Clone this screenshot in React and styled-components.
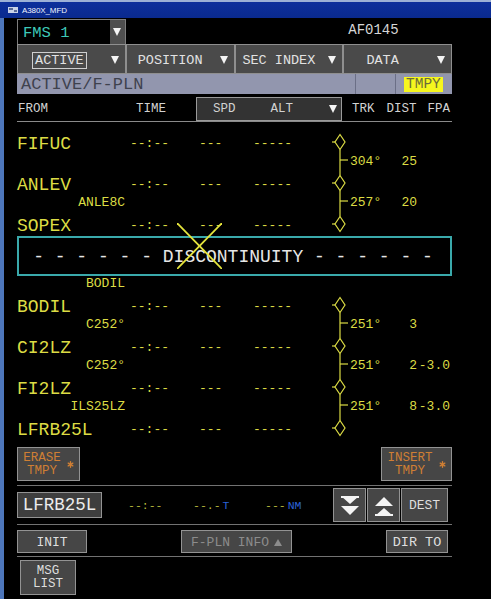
import React from "react";
import styled, { createGlobalStyle } from "styled-components";

const MONO = `"Liberation Mono", "DejaVu Sans Mono", monospace`;
const YELLOW = "#dcdc44";
const ORANGE = "#cf7f34";

const GlobalStyle = createGlobalStyle`
  html, body { margin: 0; padding: 0; background: #000; }
  body { width: 491px; height: 599px; overflow: hidden; font-family: ${MONO}; }
  * { box-sizing: border-box; }
`;

const Window = styled.div`
  width: 491px;
  height: 599px;
  display: flex;
  flex-direction: column;
  background: #000;
`;

const TitleBar = styled.div`
  height: 18px;
  flex: none;
  display: flex;
  align-items: center;
  gap: 4px;
  padding-left: 8px;
  border-top: 2px solid #9cb0d6;
  background: linear-gradient(#0d2f9c, #0a2a8e);
`;

const TitleText = styled.span`
  font-family: "Liberation Sans", Arial, sans-serif;
  font-size: 8px;
  color: #f2f4ff;
  letter-spacing: -0.1px;
`;

const Screen = styled.div`
  flex: 1;
  border-left: 4px solid #4d76bb;
  padding: 1px 0 0 13px;
`;

const Panel = styled.div`
  width: 435px;
  display: flex;
  flex-direction: column;
`;

/* ---------- top selectors ---------- */

const TopRow = styled.div`
  display: grid;
  grid-template-columns: repeat(4, 1fr);
  height: 25px;
`;

const FmsSelect = styled.div`
  display: flex;
  border: 1px solid #7d7d7d;
  border-bottom: none;
  background: #000;
`;

const FmsLabel = styled.span`
  flex: 1;
  padding: 3px 0 0 5px;
  font-size: 15.5px;
  line-height: 20px;
  color: #3ec9b9;
`;

const DropBox = styled.span`
  width: 15px;
  display: flex;
  align-items: center;
  justify-content: center;
  background: #4f4f4f;
`;

const FlightId = styled.span`
  grid-column: 4;
  padding: 2px 0 0 5px;
  font-size: 14px;
  line-height: 18px;
  color: #d6d6d6;
`;

const TabRow = styled.div`
  display: grid;
  grid-template-columns: repeat(4, 1fr);
  height: 30px;
`;

const Tab = styled.div`
  display: flex;
  align-items: center;
  padding: 2px 6px 0 0;
  background: #4a4a4a;
  border: 1px solid #8f8f8f;
  color: #e2e2e2;
  font-size: 13.5px;
`;

const TabLabel = styled.span`
  flex: 1;
  text-align: center;
  padding-right: ${(p) => p.$shift || 6}px;
`;

const Boxed = styled.span`
  border: 1px solid #cfcfcf;
  padding: 0 2px;
  line-height: 17px;
`;

const Caret = ({ size = 8, color = "#f4f4f4" }) => (
  <svg width={size} height={size} viewBox="0 0 8 8">
    <polygon points="0,0 8,0 4,8" fill={color} />
  </svg>
);

const PageBar = styled.div`
  display: flex;
  height: 20px;
  background: #9296ae;
`;

const PageTitle = styled.span`
  flex: 1;
  padding: 1px 0 0 4px;
  font-size: 17px;
  line-height: 19px;
  color: #3f424e;
`;

const PageCell = styled.span`
  width: ${(p) => p.$w}px;
  border-left: 1px solid #6b6f86;
  display: flex;
  align-items: center;
  padding-left: 8px;
`;

const TmpyBadge = styled.span`
  background: #f6f61e;
  color: #6c6c3a;
  font-size: 14.5px;
  line-height: 15px;
  padding: 0 2px;
`;

/* ---------- column header ---------- */

const HeaderRow = styled.div`
  display: flex;
  align-items: center;
  height: 28px;
  padding-top: 2px;
  border-bottom: 1px solid #8a8a8a;
  font-size: 12.5px;
  color: #d2d2d2;
`;

const HeadCell = styled.span`
  width: ${(p) => (p.$w ? `${p.$w}px` : "auto")};
  padding-left: ${(p) => p.$pl || 0}px;
  margin-right: ${(p) => p.$mr || 0}px;
`;

const SpdAltBox = styled.div`
  width: 146px;
  height: 24px;
  display: flex;
  align-items: center;
  padding: 0 4px 0 16px;
  background: #333;
  border: 1px solid #9a9a9a;
  margin-right: 10px;
  & > span:nth-child(2) { margin-left: 35px; flex: 1; }
`;

/* ---------- flight plan list ---------- */

const List = styled.div`
  display: flex;
  flex-direction: column;
  padding-top: 9px;
`;

const WaypointLine = styled.div`
  display: grid;
  grid-template-columns: 113px 69px 54px 77px 20px 1fr;
  align-items: center;
  height: 23px;
  color: ${YELLOW};
`;

const WpName = styled.span`
  font-size: 18px;
  padding-top: 3px;
  line-height: 20px;
`;

const Predict = styled.span`
  font-size: 13px;
  line-height: 14px;
  padding-top: 3px;
`;

const LegLine = styled.div`
  display: grid;
  grid-template-columns: 108px 205px 20px 50px 17px 33px;
  align-items: start;
  height: 18px;
  font-size: 13px;
  line-height: 13px;
  color: ${YELLOW};
  & > span { padding-top: 1px; }
`;

const Note = styled.span`
  text-align: right;
`;

const Num = styled.span`
  text-align: ${(p) => (p.$right ? "right" : "left")};
`;

const Discontinuity = styled.div`
  position: relative;
  height: 40px;
  display: flex;
  align-items: center;
  justify-content: center;
  border: 2px solid #3aa9ab;
  padding: 2px 3px 0 0;
  font-size: 18px;
  color: #e6e6e6;
  white-space: pre;
`;

const Cross = styled.svg`
  position: absolute;
  left: 158px;
  top: -15px;
`;

const Connector = ({ first, last }) => (
  <svg width="20" height="23" viewBox="0 0 20 23">
    <g stroke={YELLOW} strokeWidth="1.2" fill="none">
      {!first && <line x1="10" y1="0" x2="10" y2="3.5" />}
      {!last && <line x1="10" y1="18.5" x2="10" y2="23" />}
      <polygon points="10,3.5 15,11 10,18.5 5,11" />
      <line x1="2" y1="11" x2="5" y2="11" />
    </g>
  </svg>
);

const LegTick = () => (
  <svg width="20" height="18" viewBox="0 0 20 18">
    <g stroke={YELLOW} strokeWidth="1.2">
      <line x1="10" y1="0" x2="10" y2="18" />
      <line x1="10" y1="6" x2="18" y2="6" />
    </g>
  </svg>
);

/* ---------- lower keys ---------- */

const Section = styled.div`
  display: flex;
  align-items: center;
  padding: ${(p) => p.$pad || "0"};
  margin-top: ${(p) => p.$mt || 0}px;
  border-bottom: ${(p) => (p.$line ? "1px solid #727272" : "none")};
`;

const Key = styled.div`
  width: ${(p) => p.$w}px;
  height: ${(p) => p.$h}px;
  margin-left: ${(p) => p.$ml || 0}px;
  display: flex;
  align-items: center;
  justify-content: center;
  padding-top: 1px;
  background: ${(p) => p.$bg || "#464646"};
  border: 1px solid #939393;
  color: ${(p) => p.$color || "#dedede"};
  font-size: ${(p) => p.$fs || 13}px;
  line-height: 13px;
  text-align: center;
  flex: none;
`;

const KeyText = styled.span`
  display: flex;
  flex-direction: column;
  align-items: center;
  font-size: 12.5px;
  line-height: 13px;
`;

const Star = () => (
  <svg width="7" height="7" viewBox="0 0 7 7" style={{ marginLeft: 6 }}>
    <g stroke={ORANGE} strokeWidth="1.4" strokeLinecap="round">
      <line x1="3.5" y1="0.8" x2="3.5" y2="6.2" />
      <line x1="1.2" y1="2.2" x2="5.8" y2="4.8" />
      <line x1="1.2" y1="4.8" x2="5.8" y2="2.2" />
    </g>
  </svg>
);

const Info = styled.span`
  width: ${(p) => p.$w}px;
  margin-left: ${(p) => p.$ml || 0}px;
  font-size: 11.5px;
  color: #b8b83c;
  & b { font-weight: normal; color: #2b63d8; margin-left: 2px; }
`;

const KeyGroup = styled.div`
  display: flex;
  gap: 1px;
  margin-left: auto;
  margin-right: 4px;
`;

const Chevrons = ({ up }) => (
  <svg width="18" height="20" viewBox="0 0 18 20">
    <g fill="#f4f4f4" transform={up ? "rotate(180 9 10)" : undefined}>
      <polygon points="0,0 18,0 9,8" />
      <polygon points="0,10 18,10 9,19" />
      <polygon points="0,0 18,0 18,2 0,2" />
    </g>
  </svg>
);

const UpMark = () => (
  <svg width="8" height="7" viewBox="0 0 8 7" style={{ marginLeft: 5 }}>
    <polygon points="4,0 8,7 0,7" fill="#8c8c8c" />
  </svg>
);

const plan = [
  { kind: "wp", name: "FIFUC", first: true },
  { kind: "leg", trk: "304°", dist: "25" },
  { kind: "wp", name: "ANLEV" },
  { kind: "leg", note: "ANLE8C", trk: "257°", dist: "20" },
  { kind: "wp", name: "SOPEX", last: true },
  { kind: "disc" },
  { kind: "leg", note: "BODIL", bare: true },
  { kind: "wp", name: "BODIL", first: true },
  { kind: "leg", note: "C252°", trk: "251°", dist: "3" },
  { kind: "wp", name: "CI2LZ" },
  { kind: "leg", note: "C252°", trk: "251°", dist: "2", fpa: "-3.0" },
  { kind: "wp", name: "FI2LZ" },
  { kind: "leg", note: "ILS25LZ", trk: "251°", dist: "8", fpa: "-3.0" },
  { kind: "wp", name: "LFRB25L", last: true },
];

function PlanRow({ row }) {
  if (row.kind === "disc") {
    return (
      <Discontinuity>
        {"- - - - - - DISCONTINUITY - - - - - -"}
        <Cross width="45" height="46" viewBox="0 0 45 46">
          <g stroke="#e4e43c" strokeWidth="1.8">
            <line x1="0" y1="0" x2="45" y2="46" />
            <line x1="45" y1="0" x2="0" y2="46" />
          </g>
        </Cross>
      </Discontinuity>
    );
  }
  if (row.kind === "leg") {
    return (
      <LegLine>
        <Note>{row.note || ""}</Note>
        <span />
        {row.bare ? <span /> : <LegTick />}
        <Num>{row.trk || ""}</Num>
        <Num $right>{row.dist || ""}</Num>
        <Num $right>{row.fpa || ""}</Num>
      </LegLine>
    );
  }
  return (
    <WaypointLine>
      <WpName>{row.name}</WpName>
      <Predict>--:--</Predict>
      <Predict>---</Predict>
      <Predict>-----</Predict>
      <Connector first={row.first} last={row.last} />
      <span />
    </WaypointLine>
  );
}

export default function App() {
  return (
    <>
      <GlobalStyle />
      <Window>
        <TitleBar>
          <svg width="10" height="8" viewBox="0 0 10 8">
            <rect x="0" y="1" width="10" height="6" fill="#c9d2e8" />
            <rect x="1" y="2" width="4" height="2" fill="#5b6b96" />
            <rect x="6" y="4" width="3" height="2" fill="#5b6b96" />
          </svg>
          <TitleText>A380X_MFD</TitleText>
        </TitleBar>
        <Screen>
          <Panel>
            <TopRow>
              <FmsSelect>
                <FmsLabel>FMS 1</FmsLabel>
                <DropBox>
                  <Caret />
                </DropBox>
              </FmsSelect>
              <FlightId>AF0145</FlightId>
            </TopRow>
            <TabRow>
              <Tab>
                <TabLabel $shift={10}>
                  <Boxed>ACTIVE</Boxed>
                </TabLabel>
                <Caret />
              </Tab>
              <Tab>
                <TabLabel>POSITION</TabLabel>
                <Caret />
              </Tab>
              <Tab>
                <TabLabel>SEC INDEX</TabLabel>
                <Caret />
              </Tab>
              <Tab>
                <TabLabel $shift={16}>DATA</TabLabel>
                <Caret />
              </Tab>
            </TabRow>
            <PageBar>
              <PageTitle>ACTIVE/F-PLN</PageTitle>
              <PageCell $w={40} />
              <PageCell $w={57}>
                <TmpyBadge>TMPY</TmpyBadge>
              </PageCell>
            </PageBar>
            <HeaderRow>
              <HeadCell $w={113} $pl={1}>FROM</HeadCell>
              <HeadCell $w={66} $pl={6}>TIME</HeadCell>
              <SpdAltBox>
                <span>SPD</span>
                <span>ALT</span>
                <Caret />
              </SpdAltBox>
              <HeadCell $mr={12}>TRK</HeadCell>
              <HeadCell $mr={11}>DIST</HeadCell>
              <HeadCell>FPA</HeadCell>
            </HeaderRow>
            <List>
              {plan.map((row, i) => (
                <PlanRow key={i} row={row} />
              ))}
            </List>

            <Section $mt={7} $pad="0 0 4px 0" $line>
              <Key $w={63} $h={34} $color={ORANGE}>
                <KeyText>
                  <span>ERASE</span>
                  <span>TMPY</span>
                </KeyText>
                <Star />
              </Key>
              <Key $w={71} $h={34} $color={ORANGE} $ml={301}>
                <KeyText>
                  <span>INSERT</span>
                  <span>TMPY</span>
                </KeyText>
                <Star />
              </Key>
            </Section>

            <Section $pad="2px 0 2px 0" $line>
              <Key $w={85} $h={26} $fs={17.5} $bg="#3e3e3e" $color="#ececec">
                LFRB25L
              </Key>
              <Info $w={65} $ml={26}>--:--</Info>
              <Info $w={72}>
                --.-<b>T</b>
              </Info>
              <Info $w={60}>
                ---<b>NM</b>
              </Info>
              <KeyGroup>
                <Key $w={33} $h={34}>
                  <Chevrons />
                </Key>
                <Key $w={33} $h={34}>
                  <Chevrons up />
                </Key>
                <Key $w={47} $h={34}>
                  DEST
                </Key>
              </KeyGroup>
            </Section>

            <Section $pad="5px 0 3px 0" $line>
              <Key $w={70} $h={23}>INIT</Key>
              <Key $w={111} $h={23} $ml={94} $color="#8c8c8c">
                F-PLN INFO
                <UpMark />
              </Key>
              <KeyGroup>
                <Key $w={62} $h={23} $fs={13.5}>
                  DIR TO
                </Key>
              </KeyGroup>
            </Section>

            <Section $pad="3px 0 0 3px">
              <Key $w={56} $h={35}>
                <KeyText>
                  <span>MSG</span>
                  <span>LIST</span>
                </KeyText>
              </Key>
            </Section>
          </Panel>
        </Screen>
      </Window>
    </>
  );
}
